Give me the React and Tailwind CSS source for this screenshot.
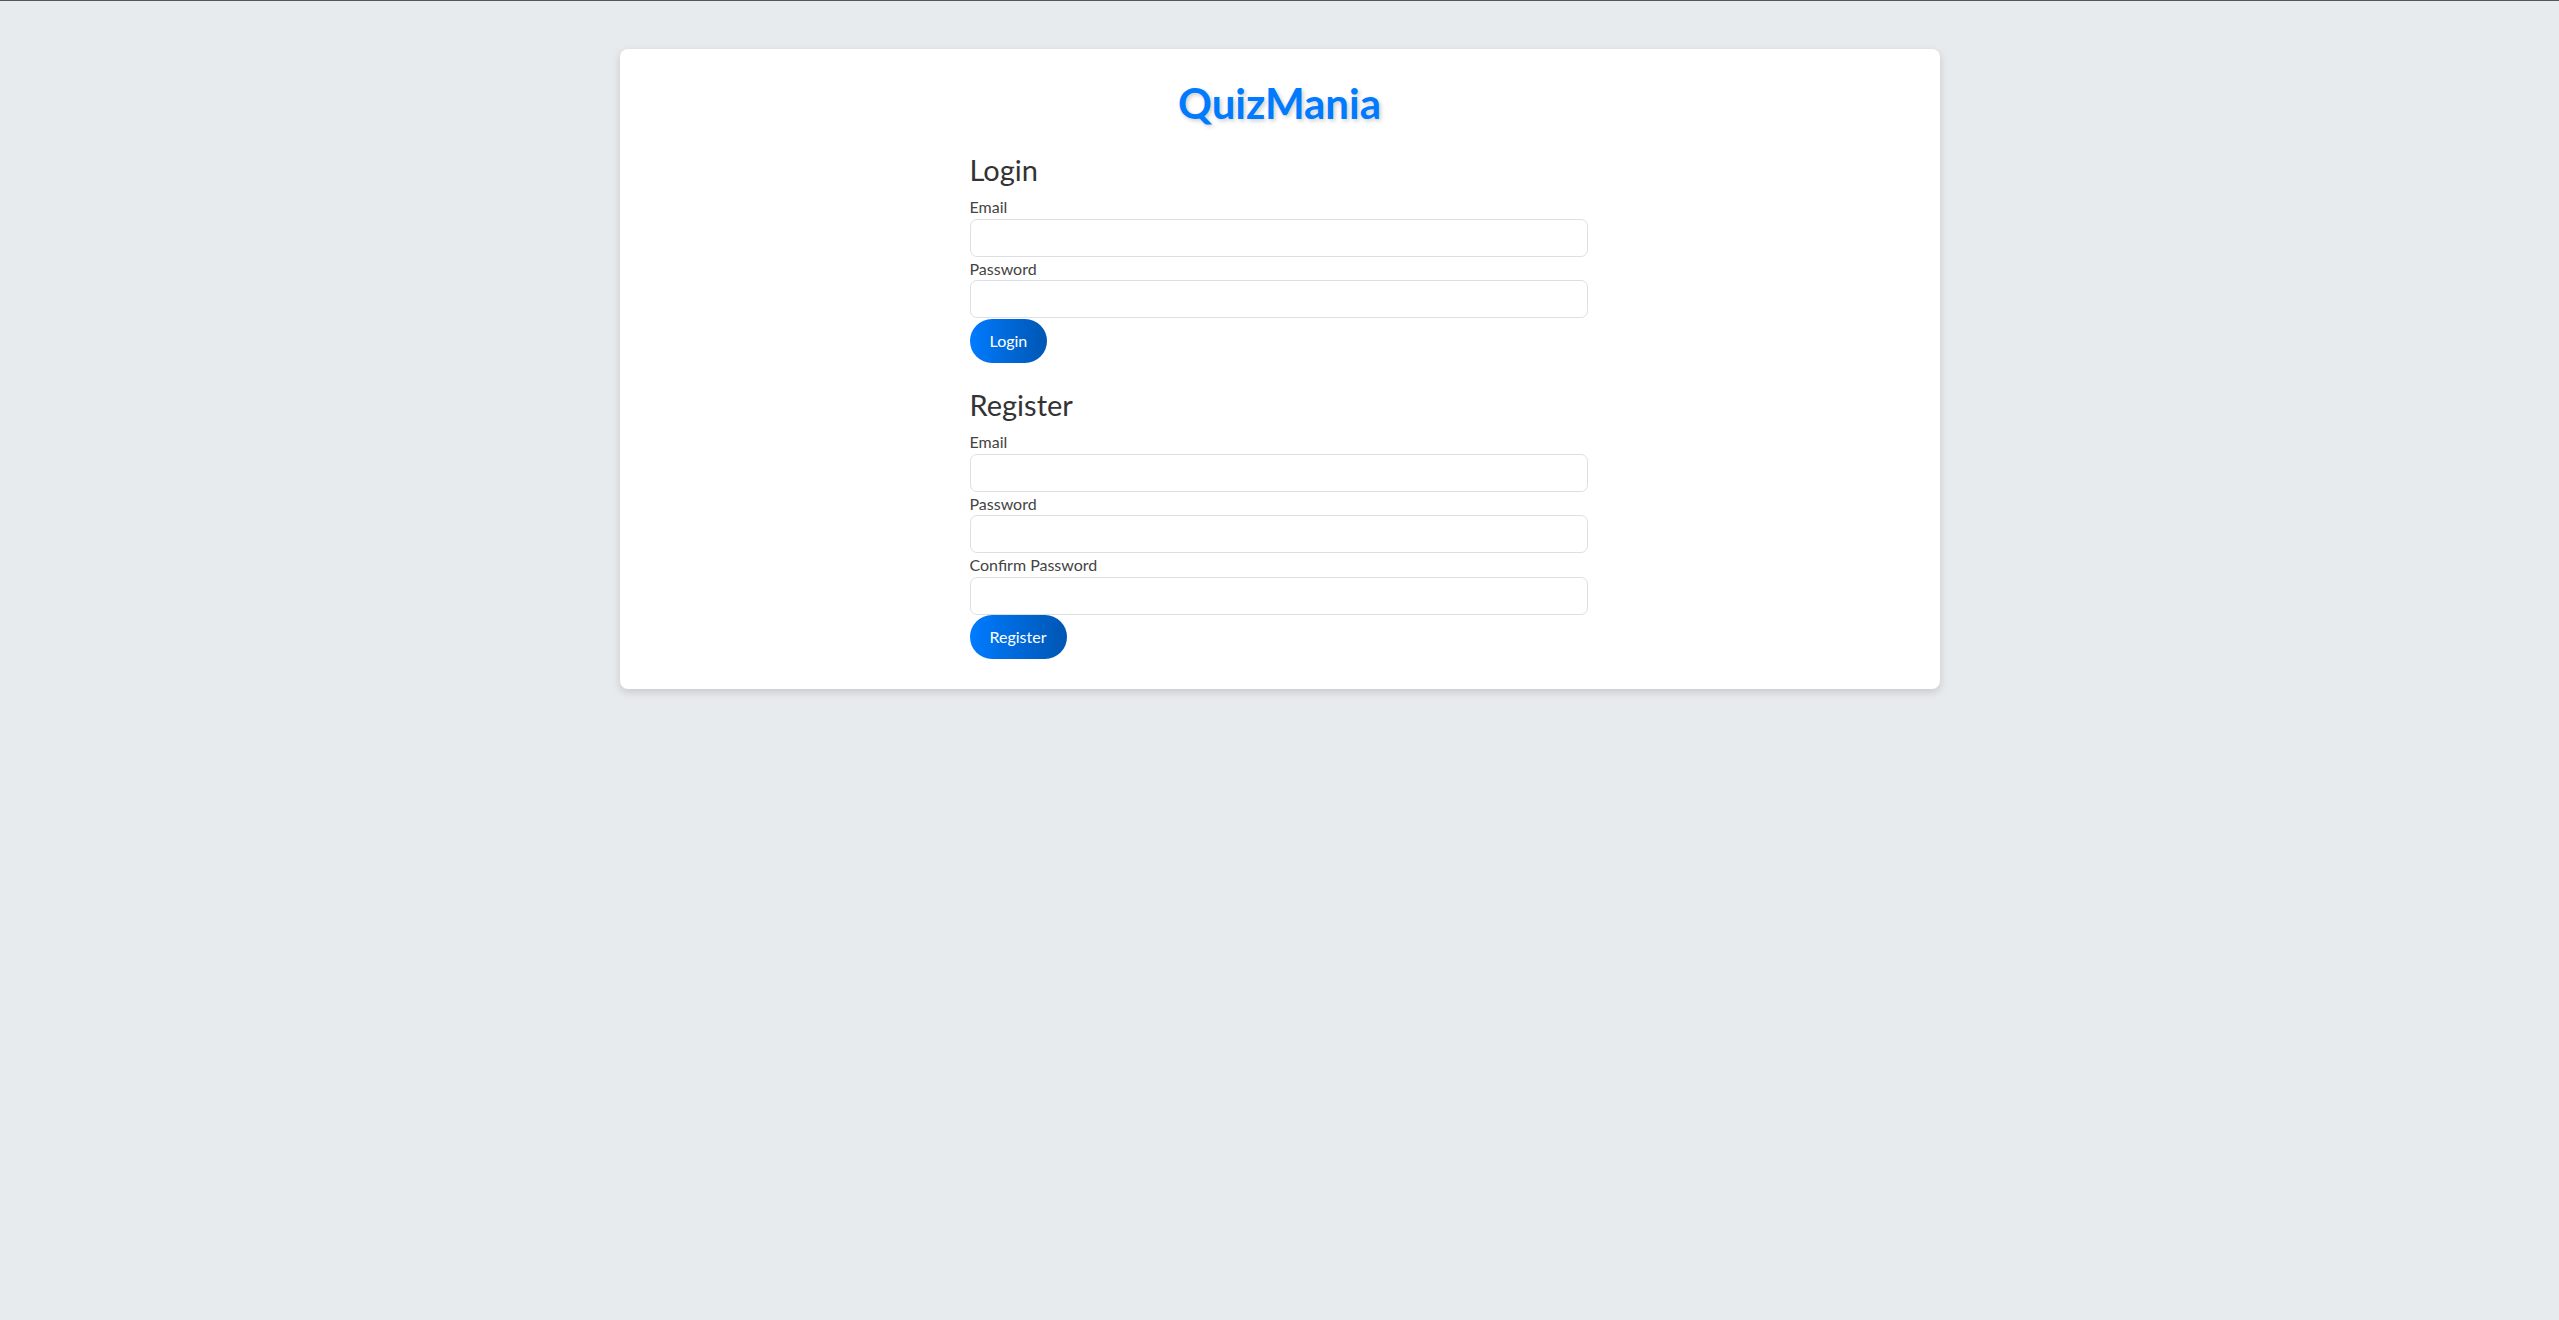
import React from "react";

const Field = ({ label, type = "text" }) => (
  <div>
    <label className="block text-[16px] leading-[23.5px] text-[#444]">{label}</label>
    <input
      type={type}
      className="block w-full h-[38px] border border-[#dcdfe4] rounded-[7px] bg-white px-3 outline-none"
    />
  </div>
);

const App = () => {
  return (
    <div
      className="min-h-screen bg-[#e8ebee] border-t border-[#555] pt-12"
      style={{ fontFamily: "Lato, 'Open Sans', sans-serif" }}
    >
      <div className="w-[1320px] mx-auto bg-white rounded-lg shadow-[0_3px_8px_rgba(0,0,0,0.15)] pt-[30px] pb-[30px]">
        {/* Title */}
        <h1 className="text-center text-[42px] leading-[49px] font-bold text-[#007bff] [text-shadow:2px_2px_4px_rgba(0,0,0,0.2)]">
          QuizMania
        </h1>

        <div className="w-[620px] mx-auto mt-[25px] pr-[2px]">
          {/* Login */}
          <section>
            <h2 className="text-[29px] leading-[34px] text-[#333] mb-2">Login</h2>
            <Field label="Email" type="email" />
            <Field label="Password" type="password" />
            <button className="mt-px h-[44px] px-5 rounded-full bg-gradient-to-r from-[#007bff] to-[#0056b3] text-white text-base">
              Login
            </button>
          </section>

          {/* Register */}
          <section className="mt-[25px]">
            <h2 className="text-[29px] leading-[34px] text-[#333] mb-2">Register</h2>
            <Field label="Email" type="email" />
            <Field label="Password" type="password" />
            <Field label="Confirm Password" type="password" />
            <button className="h-[44px] px-5 rounded-full bg-gradient-to-r from-[#007bff] to-[#0056b3] text-white text-base">
              Register
            </button>
          </section>
        </div>
      </div>
    </div>
  );
};

export default App;
